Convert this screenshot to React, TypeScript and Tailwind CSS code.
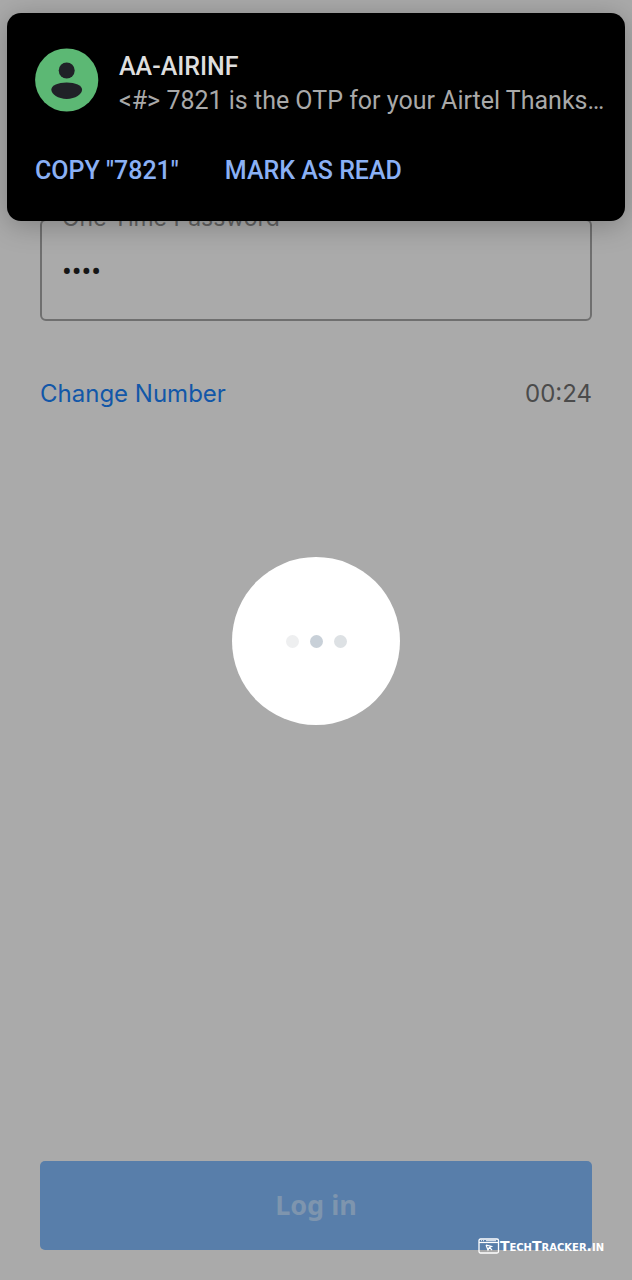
function Avatar() {
  return (
    <svg viewBox="0 0 64 64" className="size-16 shrink-0" aria-hidden="true">
      <circle cx="31.700" cy="32" r="31.600" fill="#5cb874" />
      <circle cx="31.700" cy="22.500" r="8" fill="#202127" />
      <path
        d="M16.300 41.800C16.300 37.600 23 34.600 31.700 34.600s15.400 3 15.400 7.200S40.300 51 31.700 51 16.300 46 16.300 41.800Z"
        fill="#202127"
      />
    </svg>
  );
}

function Notification() {
  return (
    <section
      aria-label="New message"
      className="absolute inset-x-[7px] top-[13px] rounded-[14px] bg-black pt-[35px] pr-4 pb-[34px] pl-7 font-[Roboto,sans-serif] shadow-[0_4px_28px_rgba(0,0,0,0.25)]"
    >
      <div className="flex items-start gap-5">
        <Avatar />
        <div className="min-w-0 flex-1 pt-px">
          <h2 className="text-[25px] leading-9 font-medium text-[#dedede]">AA-AIRINF</h2>
          <p className="truncate text-[25px] leading-8 text-[#a9a9a9]">
            &lt;#&gt; 7821 is the OTP for your Airtel Thanks…
          </p>
        </div>
      </div>
      <div className="mt-[38px] flex gap-[46px] text-[25px] leading-8 font-medium text-[#8ab0f5]">
        <button type="button">COPY "7821"</button>
        <button type="button">MARK AS READ</button>
      </div>
    </section>
  );
}

function Loader() {
  return (
    <div
      role="status"
      aria-label="Loading"
      className="flex size-[168px] items-center justify-center gap-[11px] rounded-full bg-white"
    >
      <span className="size-[13px] rounded-full bg-[#eeeff0]" />
      <span className="size-[13px] rounded-full bg-[#c8d0d8]" />
      <span className="size-[13px] rounded-full bg-[#dde1e4]" />
    </div>
  );
}

function Watermark() {
  return (
    <div className="absolute right-7 bottom-[26px] flex items-center text-white">
      <svg viewBox="0 0 22 16" className="h-4 w-[22px]" fill="none" stroke="currentColor" aria-hidden="true">
        <rect x="1" y="1" width="19.500" height="14" rx="1.500" strokeWidth="1.300" />
        <path d="M1 4.500h19.500" strokeWidth="1.200" />
        <path d="M3 2.700h1M5 2.700h1M8 2.700h10" strokeWidth="0.900" />
        <path d="M8 7l5.500 1.500-2 1 2.500 2.500M8 7l2 5 1.300-2.500" strokeWidth="1.200" />
      </svg>
      <span className="font-['DejaVu_Sans',sans-serif] text-[14px] leading-4 font-bold [font-variant-caps:small-caps]">
        TechTracker.in
      </span>
    </div>
  );
}

export default function App() {
  return (
    <div className="relative flex min-h-screen flex-col bg-[#aaaaaa] font-[Inter,sans-serif]">
      <main className="flex flex-1 flex-col px-10 pt-[205px] pb-[30px]">
        <fieldset className="rounded-md border-2 border-[#6f6f6f] px-3.5 pb-[26px]">
          <legend className="px-1.5 pb-1 text-[23px] leading-[26px] text-[#626262]">
            <label htmlFor="otp">One Time Password</label>
          </legend>
          <input
            id="otp"
            type="password"
            defaultValue="7821"
            className="mt-[18px] block h-10 w-full bg-transparent px-1.5 font-[Roboto,sans-serif] text-[29px] text-[#161616] outline-none"
          />
        </fieldset>
        <div className="mt-[57px] flex items-center justify-between text-[24px] leading-8">
          <a href="#change-number" className="text-[#1257a8]">
            Change Number
          </a>
          <span className="text-[#4b4b4b]">00:24</span>
        </div>
        <div className="mt-[147px] flex justify-center">
          <Loader />
        </div>
        <button
          type="button"
          className="mt-auto h-[89px] rounded-[5px] bg-[#587eaa] font-['Noto_Sans',sans-serif] text-[27px] font-bold text-[#7e95ae]"
        >
          Log in
        </button>
      </main>
      <Notification />
      <Watermark />
    </div>
  );
}
